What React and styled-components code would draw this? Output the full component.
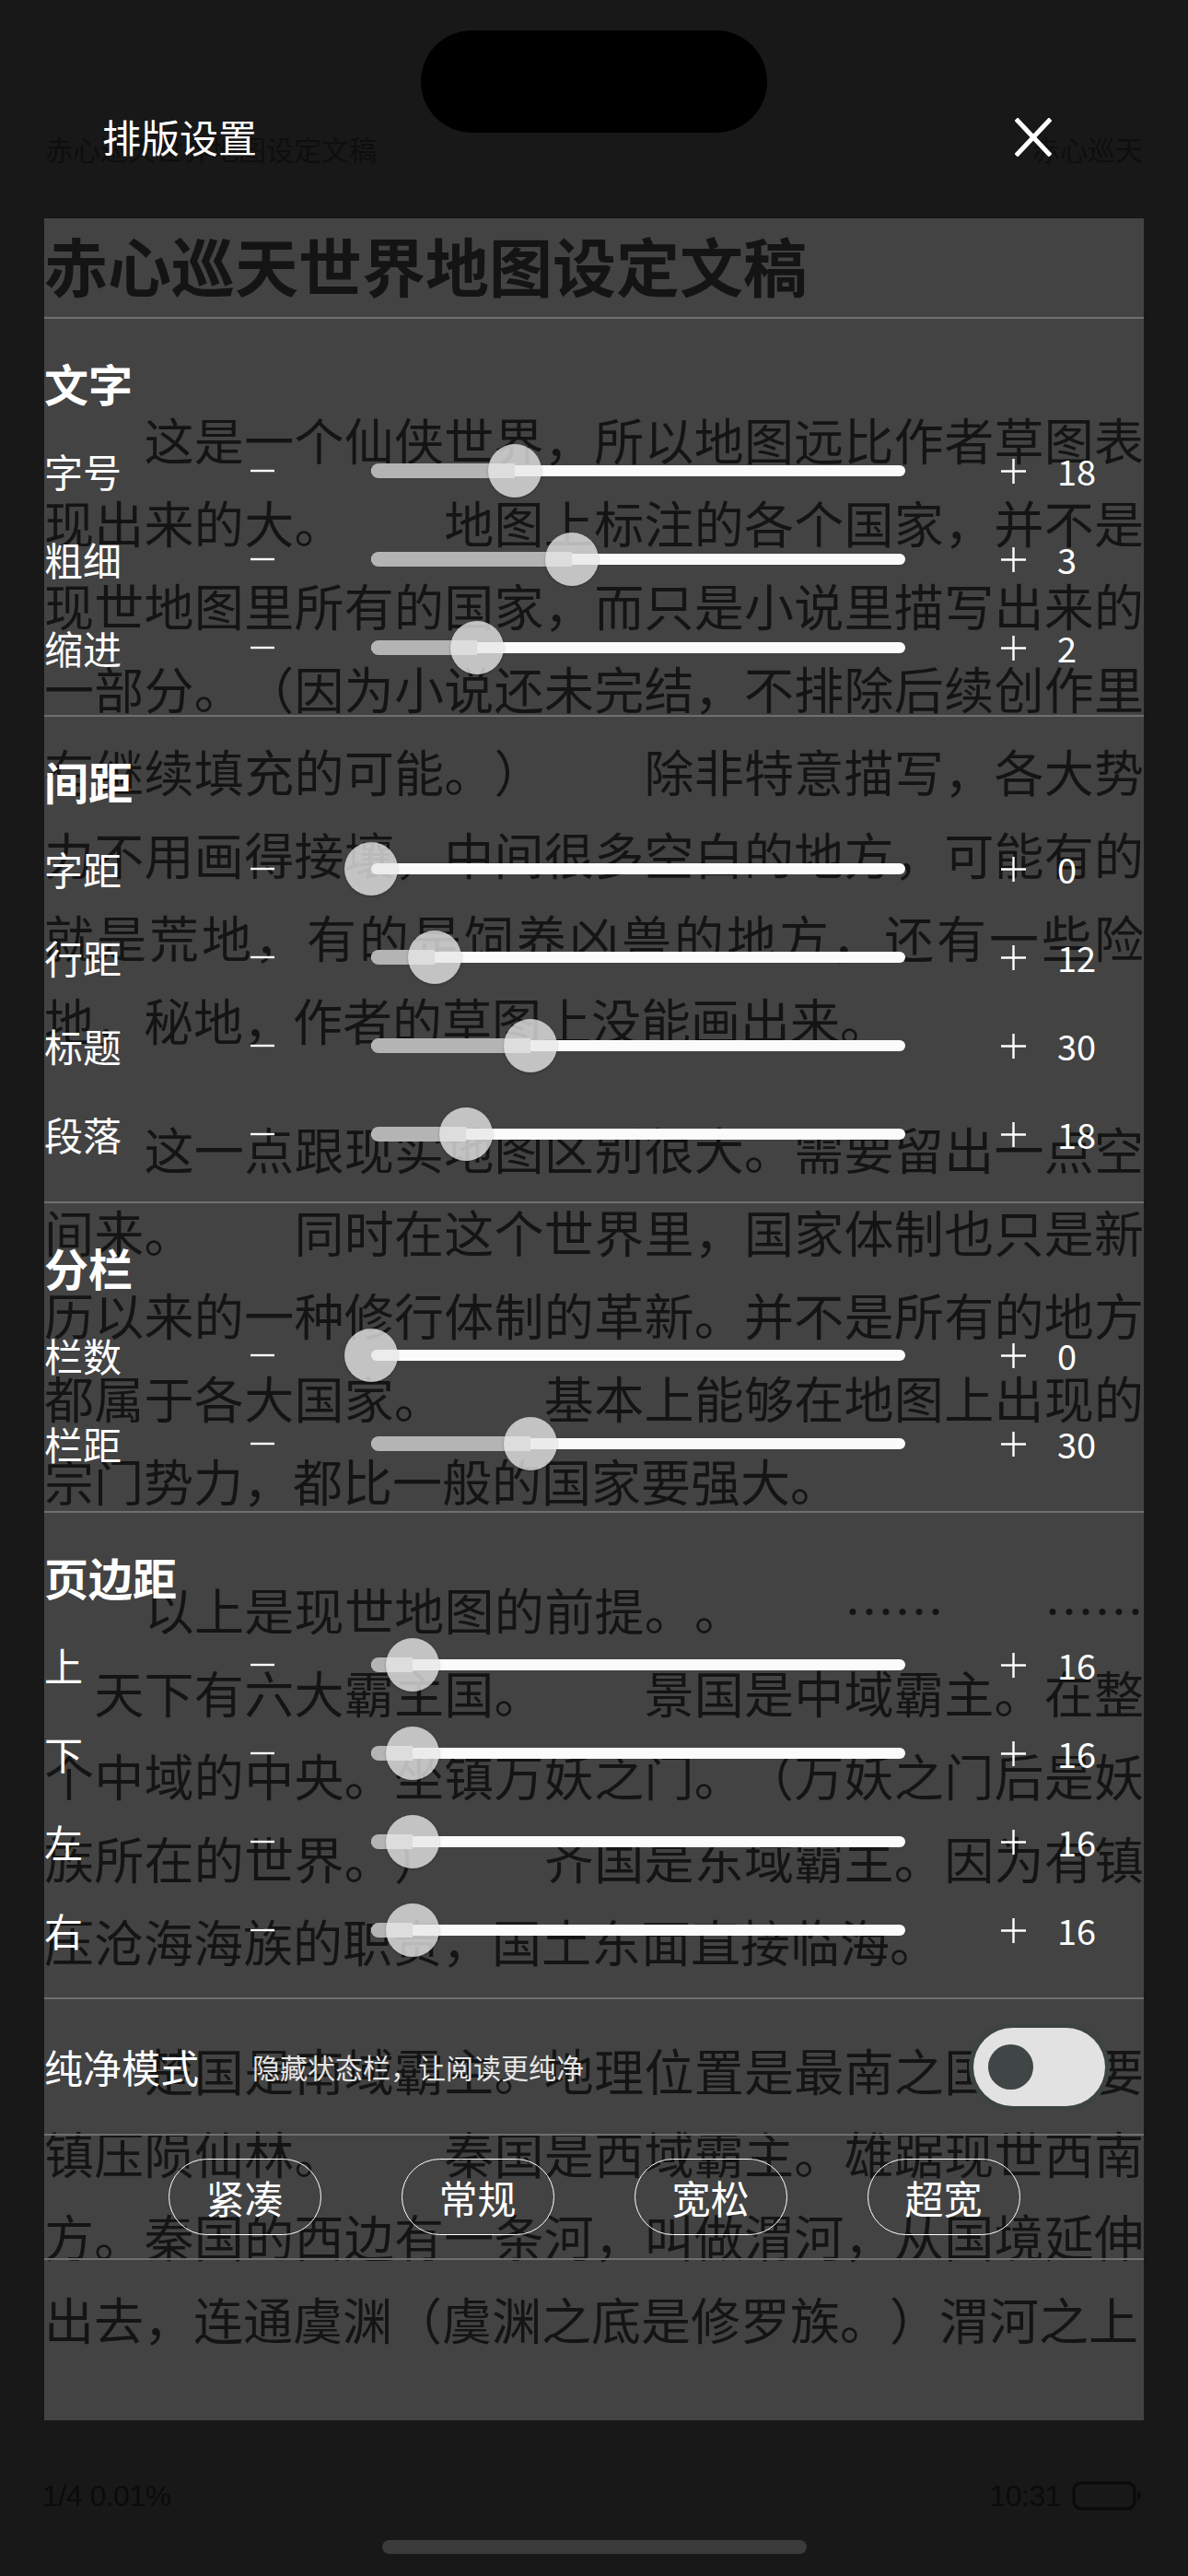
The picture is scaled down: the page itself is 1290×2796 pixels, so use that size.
import React from "react";
import styled, { createGlobalStyle } from "styled-components";

const CJK = `"Noto Sans CJK SC", "Noto Sans", sans-serif`;

const Global = createGlobalStyle`
  html, body { margin: 0; padding: 0; background: #181818; }
  * { box-sizing: border-box; }
`;

const Screen = styled.div`
  position: relative;
  width: 1290px;
  height: 2796px;
  overflow: hidden;
  background: #181818;
  font-family: ${CJK};
  text-spacing-trim: space-all;
`;

const Island = styled.div`
  position: absolute;
  top: 33px;
  left: 457px;
  width: 376px;
  height: 111px;
  border-radius: 56px;
  background: #000;
  z-index: 5;
`;

/* ---------- reader page ---------- */
const ReaderHeader = styled.div`
  height: 237px;
  padding: 141px 49px 0 49px;
  display: flex;
  justify-content: space-between;
  align-items: flex-start;
  font-size: 30px;
  line-height: 40px;
  color: #0e0e0e;
`;

const Page = styled.div`
  margin: 0 48px;
  height: 2390px;
  padding-top: 9px;
  background: #434343;
  color: #141414;
  overflow: hidden;
`;

const PageTitle = styled.h1`
  margin: 0 0 103px;
  font-size: 69px;
  line-height: 83px;
  font-weight: 700;
  white-space: nowrap;
`;

const Paragraph = styled.div`
  & + & { margin-top: 50px; }
`;

const Line = styled.div`
  font-size: 54px;
  line-height: 90px;
  height: 90px;
  text-spacing-trim: space-all;
  text-align: ${(p) => (p.$full ? "justify" : "left")};
  text-align-last: ${(p) => (p.$full ? "justify" : "left")};
  text-justify: inter-character;
`;

const ReaderFooter = styled.div`
  padding: 62px 50px 0 46px;
  height: 102px;
  display: flex;
  justify-content: space-between;
  align-items: center;
  font-family: "Liberation Sans", Arial, sans-serif;
  font-size: 32px;
  line-height: 40px;
  color: #0b0b0b;
  letter-spacing: -0.5px;
`;

const FooterRight = styled.div`
  display: flex;
  align-items: center;
  gap: 12px;
`;

const HomeIndicator = styled.div`
  margin: 28px auto 0;
  width: 461px;
  height: 15px;
  border-radius: 8px;
  background: #3b3b3b;
`;

/* ---------- settings overlay ---------- */
const Overlay = styled.div`
  position: absolute;
  inset: 0;
  padding: 0 48px;
  display: flex;
  flex-direction: column;
  color: #fff;
  z-index: 3;
`;

const OverlayHeader = styled.div`
  height: 346px;
  padding: 118px 100px 0 63px;
  border-bottom: 2px solid #6f6f6f;
  display: flex;
  justify-content: space-between;
  align-items: flex-start;
`;

const OverlayTitle = styled.div`
  font-size: 42px;
  line-height: 60px;
`;

const CloseBtn = styled.div`
  margin-top: 10px;
  width: 40px;
  height: 42px;
  display: flex;
`;

const Section = styled.div`
  padding: 39px 0 25px;
  border-bottom: 2px solid #6f6f6f;
`;

const SectionTitle = styled.div`
  font-size: 48px;
  line-height: 60px;
  height: 60px;
  font-weight: 700;
  margin-bottom: 18px;
`;

const Row = styled.div`
  height: 96px;
  display: flex;
  align-items: center;
`;

const RowLabel = styled.div`
  width: 223px;
  font-size: 42px;
  line-height: 50px;
`;

const StepIcon = styled.svg`
  flex: none;
  display: block;
`;

const Track = styled.div`
  position: relative;
  flex: none;
  width: 580px;
  height: 58px;
  margin: 0 103px 0 104px;
`;

const Rail = styled.div`
  position: absolute;
  left: 0;
  right: 0;
  top: 23px;
  height: 12px;
  border-radius: 6px;
  background: #fbfbfb;
`;

const Fill = styled.div`
  position: absolute;
  left: 0;
  top: 21px;
  height: 16px;
  border-radius: 8px 0 0 8px;
  background: #b4b4b4;
`;

const Thumb = styled.div`
  position: absolute;
  top: 0;
  width: 58px;
  height: 58px;
  margin-left: -29px;
  border-radius: 50%;
  background: rgba(232, 232, 232, 0.78);
  box-shadow: 0 1px 3px rgba(0, 0, 0, 0.25);
`;

const Value = styled.div`
  margin-left: 33px;
  font-size: 38px;
  line-height: 50px;
`;

const PureSection = styled.div`
  height: 148px;
  border-bottom: 2px solid #6f6f6f;
  display: flex;
  align-items: center;
`;

const PureLabel = styled.div`
  font-size: 42px;
  line-height: 50px;
`;

const PureHint = styled.div`
  margin-left: 58px;
  font-size: 30px;
  line-height: 40px;
  color: #e6e6e6;
  flex: 1;
`;

const Toggle = styled.div`
  position: relative;
  margin-right: 42px;
  width: 143px;
  height: 85px;
  border-radius: 43px;
  background: #e2e2e2;
  box-shadow: 0 0 0 5px #3d4343;
`;

const Knob = styled.div`
  position: absolute;
  left: 16px;
  top: 18px;
  width: 49px;
  height: 49px;
  border-radius: 50%;
  background: #404545;
`;

const PresetSection = styled.div`
  height: 135px;
  border-bottom: 2px solid #6f6f6f;
  display: flex;
  align-items: center;
  justify-content: center;
  gap: 87px;
`;

const Preset = styled.div`
  width: 166px;
  height: 83px;
  border: 1.5px solid #fff;
  border-radius: 42px;
  display: flex;
  align-items: center;
  justify-content: center;
  font-size: 42px;
  color: #fff;
`;

const paragraphs = [
  [
    "　　这是一个仙侠世界，所以地图远比作者草图表",
    "现出来的大。　　地图上标注的各个国家，并不是",
    "现世地图里所有的国家，而只是小说里描写出来的",
    "一部分。（因为小说还未完结，不排除后续创作里",
    "有继续填充的可能。）　　除非特意描写，各大势",
    "力不用画得接壤，中间很多空白的地方，可能有的",
    "就是荒地，有的是饲养凶兽的地方，还有一些险",
    "地，秘地，作者的草图上没能画出来。",
  ],
  [
    "　　这一点跟现实地图区别很大。需要留出一点空",
    "间来。　　同时在这个世界里，国家体制也只是新",
    "历以来的一种修行体制的革新。并不是所有的地方",
    "都属于各大国家。　　基本上能够在地图上出现的",
    "宗门势力，都比一般的国家要强大。",
  ],
  [
    "　　以上是现世地图的前提。。　　……　　……",
    "　天下有六大霸主国。　　景国是中域霸主。在整",
    "个中域的中央。坐镇万妖之门。（万妖之门后是妖",
    "族所在的世界。）　　齐国是东域霸主。因为有镇",
    "压沧海海族的职责，国土东面直接临海。",
  ],
  [
    "　　楚国是南域霸主。地理位置是最南之国，主要",
    "镇压陨仙林。　　秦国是西域霸主。雄踞现世西南",
    "方。秦国的西边有一条河，叫做渭河，从国境延伸",
    "出去，连通虞渊（虞渊之底是修罗族。）渭河之上",
  ],
];

const groups = [
  {
    title: "文字",
    rows: [
      ["字号", 18, 0.269],
      ["粗细", 3, 0.375],
      ["缩进", 2, 0.198],
    ],
  },
  {
    title: "间距",
    rows: [
      ["字距", 0, 0],
      ["行距", 12, 0.119],
      ["标题", 30, 0.298],
      ["段落", 18, 0.178],
    ],
  },
  {
    title: "分栏",
    rows: [
      ["栏数", 0, 0],
      ["栏距", 30, 0.298],
    ],
  },
  {
    title: "页边距",
    rows: [
      ["上", 16, 0.078],
      ["下", 16, 0.078],
      ["左", 16, 0.078],
      ["右", 16, 0.078],
    ],
  },
];

const MinusIcon = () => (
  <StepIcon width="28" height="28" viewBox="0 0 28 28">
    <path d="M1 14H27" stroke="#fff" strokeWidth="2.4" />
  </StepIcon>
);

const PlusIcon = () => (
  <StepIcon width="29" height="29" viewBox="0 0 29 29">
    <path d="M1 14.5H28M14.5 1V28" stroke="#fff" strokeWidth="2.4" />
  </StepIcon>
);

const Battery = () => (
  <svg width="76" height="32" viewBox="0 0 76 32">
    <rect x="2" y="2" width="66" height="28" rx="8" fill="none" stroke="#0b0b0b" strokeWidth="3.5" />
    <path d="M71 11 Q75 12 75 16 Q75 20 71 21 Z" fill="#0b0b0b" />
  </svg>
);

const SliderRow = ({ label, value, frac }) => {
  const x = frac * 580;
  return (
    <Row>
      <RowLabel>{label}</RowLabel>
      <MinusIcon />
      <Track>
        <Rail />
        <Fill style={{ width: `${x}px` }} />
        <Thumb style={{ left: `${x}px` }} />
      </Track>
      <PlusIcon />
      <Value>{value}</Value>
    </Row>
  );
};

export default function App() {
  return (
    <>
      <Global />
      <Screen>
        <Island />
        <ReaderHeader>
          <span>赤心巡天世界地图设定文稿</span>
          <span>赤心巡天</span>
        </ReaderHeader>
        <Page>
          <PageTitle>赤心巡天世界地图设定文稿</PageTitle>
          {paragraphs.map((lines, i) => (
            <Paragraph key={i}>
              {lines.map((t, j) => (
                <Line key={j} $full={j < lines.length - 1}>
                  {t}
                </Line>
              ))}
            </Paragraph>
          ))}
        </Page>
        <ReaderFooter>
          <span>1/4 0.01%</span>
          <FooterRight>
            <span>10:31</span>
            <Battery />
          </FooterRight>
        </ReaderFooter>
        <HomeIndicator />

        <Overlay>
          <OverlayHeader>
            <OverlayTitle>排版设置</OverlayTitle>
            <CloseBtn>
              <svg width="40" height="42" viewBox="0 0 40 42">
                <path d="M3 3L37 39M37 3L3 39" stroke="#fff" strokeWidth="5" strokeLinecap="square" />
              </svg>
            </CloseBtn>
          </OverlayHeader>
          {groups.map((g) => (
            <Section key={g.title}>
              <SectionTitle>{g.title}</SectionTitle>
              {g.rows.map(([label, value, frac]) => (
                <SliderRow key={label} label={label} value={value} frac={frac} />
              ))}
            </Section>
          ))}
          <PureSection>
            <PureLabel>纯净模式</PureLabel>
            <PureHint>隐藏状态栏，让阅读更纯净</PureHint>
            <Toggle>
              <Knob />
            </Toggle>
          </PureSection>
          <PresetSection>
            {["紧凑", "常规", "宽松", "超宽"].map((t) => (
              <Preset key={t}>{t}</Preset>
            ))}
          </PresetSection>
        </Overlay>
      </Screen>
    </>
  );
}
